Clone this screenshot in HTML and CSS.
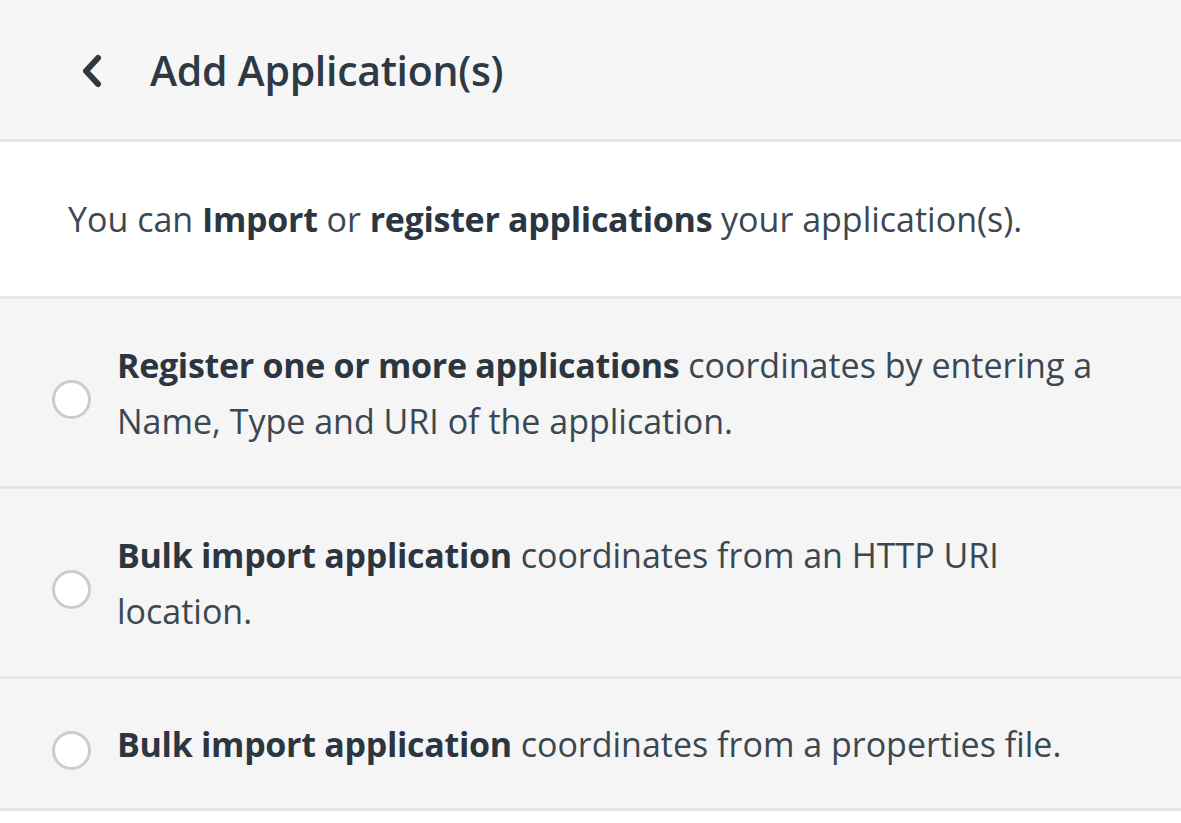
FILE: index.html
```html
<!DOCTYPE html>
<html>
<head>
<meta charset="utf-8">
<link rel="stylesheet" href="styles.css">
</head>
<body>
<div class="page">
  <header class="header">
    <svg class="back" viewBox="0 0 24 34" width="24" height="34">
      <path d="M18 4 L6 17 L18 30" fill="none" stroke="#2d3a44" stroke-width="6" stroke-linecap="round" stroke-linejoin="round"/>
    </svg>
    <h1 class="title">Add Application(s)</h1>
  </header>
  <section class="intro">
    <p>You can <b>Import</b> or <b>register applications</b> your application(s).</p>
  </section>
  <label class="option opt-tall">
    <span class="radio"></span>
    <span class="opt-text"><b>Register one or more applications</b> coordinates by entering a Name, Type and URI of the application.</span>
  </label>
  <label class="option opt-tall">
    <span class="radio"></span>
    <span class="opt-text"><b>Bulk import application</b> coordinates from an HTTP URI location.</span>
  </label>
  <label class="option opt-short">
    <span class="radio"></span>
    <span class="opt-text"><b>Bulk import application</b> coordinates from a properties file.</span>
  </label>
</div>
</body>
</html>
```

FILE: styles.css
```css
html, body {
  margin: 0;
  padding: 0;
  background: #ffffff;
}
.page {
  font-family: "Open Sans", "Noto Sans", sans-serif;
  color: #3b4852;
  width: 1181px;
}
.header {
  height: 139px;
  background: #f6f6f6;
  border-bottom: 3px solid #e3e6ea;
  display: flex;
  align-items: center;
  padding-left: 80px;
}
.back {
  display: block;
  margin-top: 2px;
}
.title {
  margin: 0 0 0 46px;
  font-size: 41px;
  font-weight: 600;
  color: #2d3a44;
  letter-spacing: -0.3px;
}
.intro {
  height: 154px;
  display: flex;
  align-items: center;
  padding-left: 68px;
  border-bottom: 3px solid #e3e6ea;
}
.intro p {
  margin: 0;
  font-size: 34px;
}
b {
  font-weight: 700;
  color: #2b3640;
  letter-spacing: -0.3px;
}
.option {
  display: flex;
  align-items: center;
  background: #f5f5f5;
  border-bottom: 3px solid #e3e6ea;
  padding-left: 52px;
  padding-right: 64px;
}
.opt-tall {
  height: 187px;
}
.opt-short {
  height: 129px;
}
.radio {
  flex: none;
  width: 33px;
  height: 33px;
  border: 3px solid #c9ccd0;
  border-radius: 50%;
  background: #ffffff;
  margin-right: 26px;
  margin-top: 14px;
}
.opt-text {
  font-size: 34px;
  line-height: 56px;
}
```
